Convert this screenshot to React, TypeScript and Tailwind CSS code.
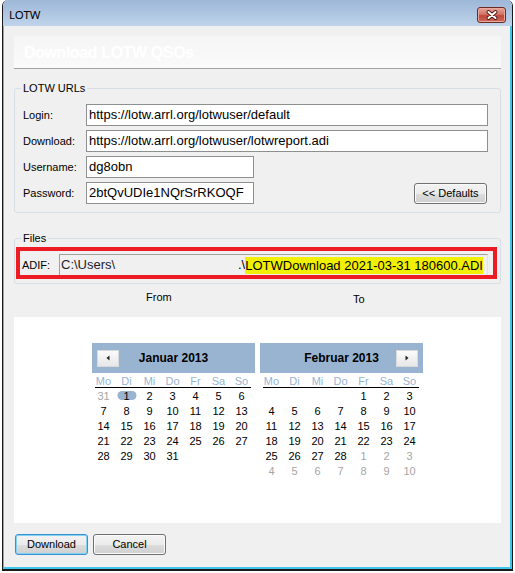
import React from "react";

type Cell = { d: number; g?: boolean; today?: boolean } | null;

const janCells: Cell[] = [
  { d: 31, g: true },
  ...Array.from({ length: 31 }, (_, i) => ({ d: i + 1, today: i === 0 })),
  null,
  null,
  null,
];

const febCells: Cell[] = [
  null,
  null,
  null,
  null,
  ...Array.from({ length: 28 }, (_, i) => ({ d: i + 1 })),
  ...Array.from({ length: 10 }, (_, i) => ({ d: i + 1, g: true })),
];

const dayNames = ["Mo", "Di", "Mi", "Do", "Fr", "Sa", "So"];

function NavBtn({ dir }: { dir: "l" | "r" }) {
  return (
    <div className="w-[22px] h-[17px] border border-[#d9d9d9] bg-gradient-to-b from-[#fbfbfb] to-[#e7e7e7] flex items-center justify-center">
      <svg width="4" height="6" viewBox="0 0 4 6">
        {dir === "l" ? (
          <polygon points="3.5,0.5 0.5,3 3.5,5.5" fill="#222" />
        ) : (
          <polygon points="0.5,0.5 3.5,3 0.5,5.5" fill="#222" />
        )}
      </svg>
    </div>
  );
}

function Calendar({
  title,
  cells,
  prev,
  next,
}: {
  title: string;
  cells: Cell[];
  prev?: boolean;
  next?: boolean;
}) {
  const rows: Cell[][] = [];
  for (let i = 0; i < cells.length; i += 7) rows.push(cells.slice(i, i + 7));
  return (
    <div className="w-[163px]">
      <div className="h-[30px] bg-[#99b4d1] grid grid-cols-[22px_1fr_22px] items-center px-[5px]">
        <div>{prev && <NavBtn dir="l" />}</div>
        <div className="text-center font-bold text-[12px] leading-[14px] text-black">{title}</div>
        <div>{next && <NavBtn dir="r" />}</div>
      </div>
      <div className="w-[161px] h-[14px] pt-[2px] grid grid-cols-7 text-center text-[11px] leading-[12px] text-[#99b4d1]">
        {dayNames.map((n) => (
          <div key={n}>{n}</div>
        ))}
      </div>
      <div className="ml-[3px] w-[156px] h-px bg-black" />
      <div className="mt-[1px] flex flex-col">
        {rows.map((r, ri) => (
          <div key={ri} className="w-[161px] h-[15px] grid grid-cols-7 text-center text-[11px] leading-[15px]">
            {r.map((c, ci) => (
              <div key={ci} className="relative">
                {c && c.today && (
                  <span className="absolute left-1/2 top-[2px] -translate-x-1/2 w-[19px] h-[9px] rounded-full bg-[#99b4d1]" />
                )}
                {c && (
                  <span className={`relative ${c.g ? "text-[#a5a5a5]" : "text-black"}`}>{c.d}</span>
                )}
              </div>
            ))}
          </div>
        ))}
      </div>
    </div>
  );
}

function Field({ w, value }: { w: string; value: string }) {
  return (
    <div
      className={`${w} h-[22px] shrink-0 bg-white border border-[#8e8f8f] flex items-center pl-[2px] text-[13px] whitespace-nowrap overflow-hidden text-black`}
    >
      {value}
    </div>
  );
}

function Label({ children, w }: { children: React.ReactNode; w: string }) {
  return <div className={`${w} shrink-0 text-[11px] leading-[13px] text-black`}>{children}</div>;
}

const btn =
  "h-[21px] w-[73px] rounded-[3px] border bg-[linear-gradient(to_bottom,#f3f3f3_0%,#ebebeb_50%,#dddddd_51%,#cfcfcf_100%)] text-[11px] leading-none text-black flex items-center justify-center";

export default function App() {
  return (
    <div className="w-[515px] h-[573px] bg-white font-['Liberation_Sans',Arial,sans-serif] text-black">
      <div className="ml-[2px] w-[511px] h-[571px] border-x border-b-2 border-[#1a1a1a] rounded-t-[6px] flex flex-col overflow-hidden">
        {/* title bar */}
        <div className="h-[26px] shrink-0 bg-gradient-to-b from-[#9db7d8] to-[#bfd4eb] flex items-start pl-[6px] pr-[6px]">
          <span className="font-['Noto_Sans',sans-serif] text-[11.5px] leading-[14px] text-black mt-[8px]">LOTW</span>
          <div className="ml-auto mt-[7px] w-[29px] h-[16px] rounded-[3px] border border-[#6b2a22] bg-[linear-gradient(to_bottom,#e6a397_0%,#d37468_45%,#c0463a_55%,#cd6a5c_100%)] flex items-center justify-center shadow-[inset_0_0_0_1px_#e9a99e]">
            <svg width="12" height="10" viewBox="0 0 12 10">
              <path d="M2.5 2 L9.5 8 M9.5 2 L2.5 8" stroke="#4d1a14" strokeWidth="3.8" strokeLinecap="round" />
              <path d="M2.5 2 L9.5 8 M9.5 2 L2.5 8" stroke="#ffffff" strokeWidth="2" strokeLinecap="round" />
            </svg>
          </div>
        </div>

        {/* client */}
        <div className="flex-1 border-l border-r-2 border-b-2 border-[#40c4ee] bg-[#f0f0f0] pl-[10px] pr-[9px] pt-[10px] flex flex-col">
          {/* banner */}
          <div className="h-[33px] shrink-0 bg-gradient-to-b from-[#f5f5f5] to-[#fafafa] border-b border-[#a0a0a0] flex items-center pl-[10px] pt-[1px]">
            <span className="text-white font-bold text-[16px] leading-[18px] tracking-[-0.4px]">Download LOTW QSOs</span>
          </div>

          {/* LOTW URLs group */}
          <div className="relative mt-[19px] border border-[#d5dfe5] rounded-[3px] pt-[15px] pb-[8px] pl-[8px] pr-[12px]">
            <span className="absolute left-[6px] -top-[7px] px-[2px] bg-[#f0f0f0] text-[11px] leading-[13px]">LOTW URLs</span>
            <div className="flex flex-col gap-[4px]">
              <div className="flex items-center">
                <Label w="w-[63px]">Login:</Label>
                <Field w="w-[402px]" value="https://lotw.arrl.org/lotwuser/default" />
              </div>
              <div className="flex items-center">
                <Label w="w-[63px]">Download:</Label>
                <Field w="w-[402px]" value="https://lotw.arrl.org/lotwuser/lotwreport.adi" />
              </div>
              <div className="flex items-center">
                <Label w="w-[63px]">Username:</Label>
                <Field w="w-[168px]" value="dg8obn" />
              </div>
              <div className="flex items-center">
                <Label w="w-[63px]">Password:</Label>
                <Field w="w-[168px]" value="2btQvUDIe1NQrSrRKOQF" />
                <div className={`${btn} ml-auto mr-[1px] self-end border-[#707070] shadow-[inset_0_0_0_1px_#fafafa]`}>
                  &lt;&lt; Defaults
                </div>
              </div>
            </div>
          </div>

          {/* Files group */}
          <div className="relative mt-[25px] border border-[#d5dfe5] rounded-[3px] pt-[15px] pb-[7px] pl-[7px]">
            <span className="absolute left-[6px] -top-[7px] px-[2px] bg-[#f0f0f0] text-[11px] leading-[13px]">Files</span>
            <div className="flex items-center">
              <Label w="w-[37px]">ADIF:</Label>
              <div className="w-[429px] h-[22px] shrink-0 bg-[#f0f0f0] border-t border-l border-[#a0a0a0] border-r border-b border-r-[#e3e3e3] border-b-[#e3e3e3] flex items-center pl-[1px] text-[13px] whitespace-nowrap overflow-hidden">
                <span className="w-[177px] shrink-0 text-[#1c1c2a]">C:\Users\</span>
                <span>.\</span>
                <span className="bg-[#f0f000] leading-[17px]">LOTWDownload 2021-03-31 180600.ADI</span>
              </div>
            </div>
            <div className="absolute left-[1px] top-[8px] w-[481px] h-[32px] border-[4px] border-[#ed1c24] pointer-events-none" />
          </div>

          {/* From / To */}
          <div className="h-[33px] shrink-0 flex text-[11px] leading-[13px]">
            <div className="ml-[132px] w-[207px] pt-[7px]">From</div>
            <div className="pt-[9px]">To</div>
          </div>

          {/* calendars */}
          <div className="h-[206px] shrink-0 bg-white pt-[26px] flex justify-center items-start gap-[5px]">
            <Calendar title="Januar 2013" cells={janCells} prev />
            <Calendar title="Februar 2013" cells={febCells} next />
          </div>

          {/* buttons */}
          <div className="mt-[11px] flex gap-[5px] pl-[1px]">
            <div className={`${btn} border-[#3c8fd0] shadow-[inset_0_0_0_1px_#7fd3f5]`}>Download</div>
            <div className={`${btn} border-[#707070] shadow-[inset_0_0_0_1px_#fafafa]`}>Cancel</div>
          </div>
        </div>
      </div>
    </div>
  );
}
